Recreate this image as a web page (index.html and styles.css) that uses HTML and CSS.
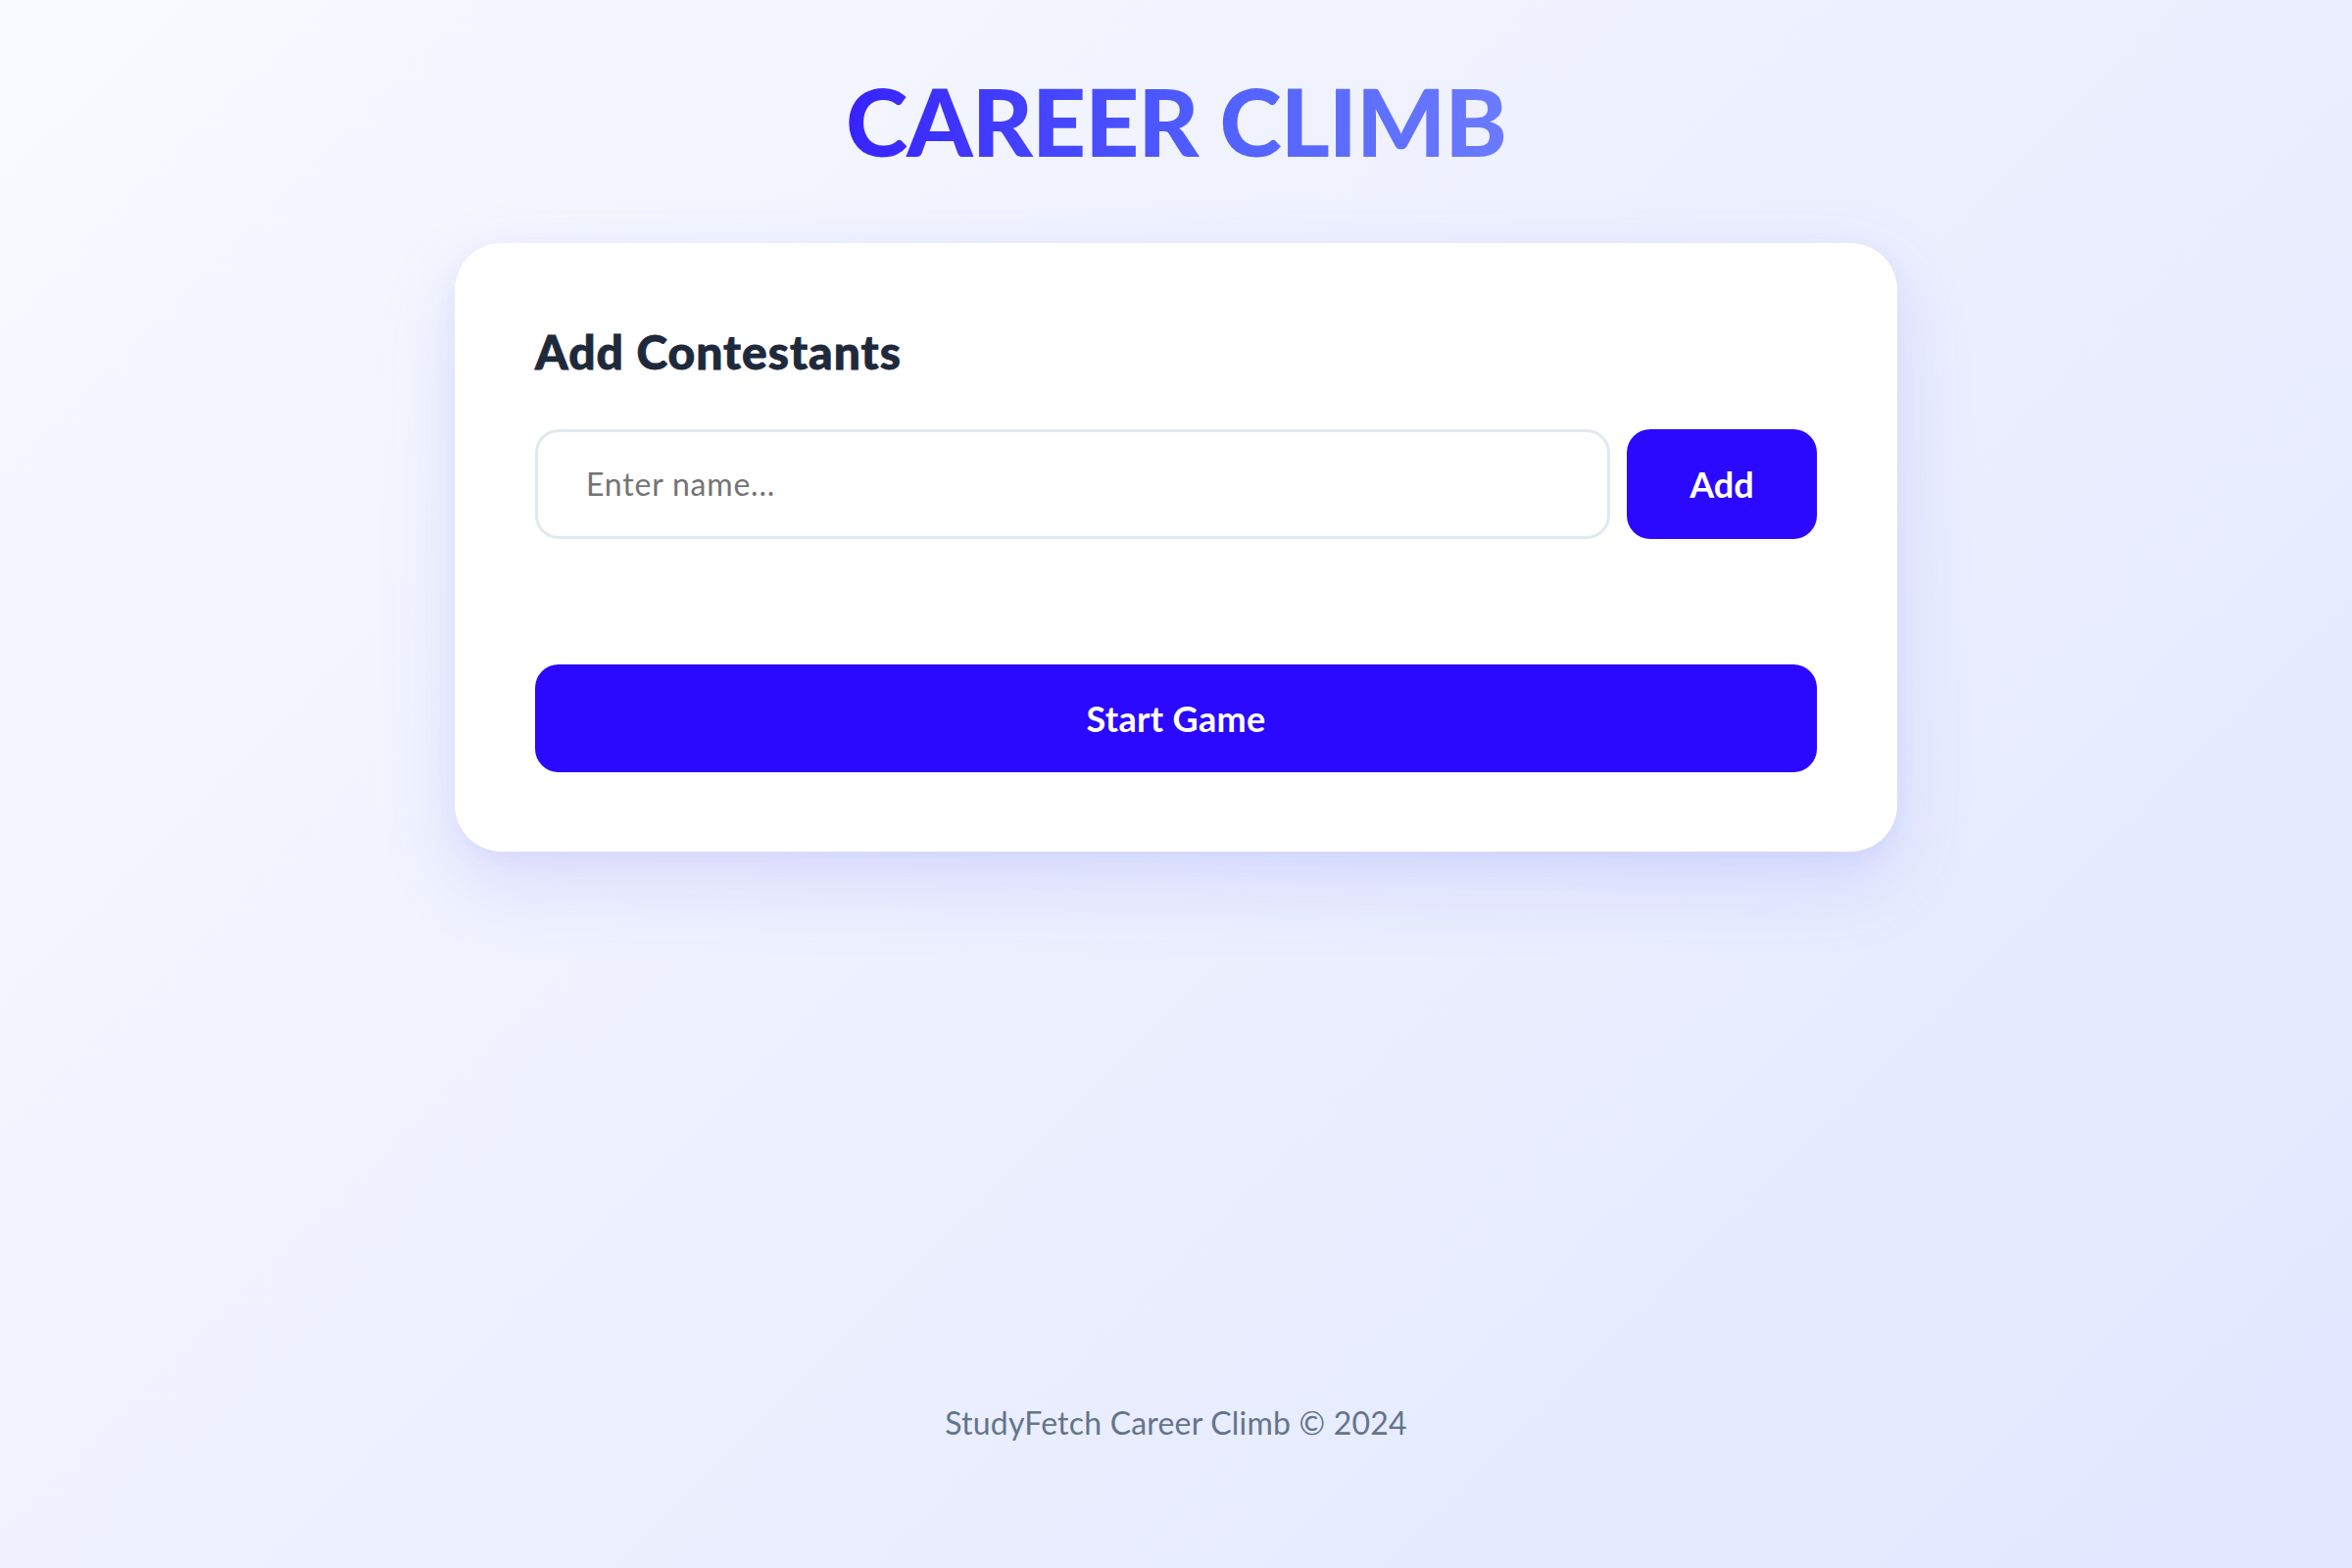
FILE: index.html
```html
<!DOCTYPE html>
<html lang="en">
<head>
<meta charset="utf-8">
<title>Career Climb</title>
<link rel="stylesheet" href="styles.css">
</head>
<body>
  <h1 class="title">CAREER CLIMB</h1>
  <main class="card">
    <h2 class="card-heading">Add Contestants</h2>
    <form class="add-row" onsubmit="return false">
      <input class="name-input" type="text" placeholder="Enter name...">
      <button class="btn btn-add" type="button">Add</button>
    </form>
    <button class="btn btn-start" type="button">Start Game</button>
  </main>
  <footer class="footer">StudyFetch Career Climb © 2024</footer>
</body>
</html>
```

FILE: styles.css
```css
* { box-sizing: border-box; }
html, body { margin: 0; padding: 0; }
body {
  min-height: 100vh;
  display: flex;
  flex-direction: column;
  align-items: center;
  font-family: Lato, "Open Sans", "Liberation Sans", sans-serif;
  background: linear-gradient(135deg, #f8faff 0%, #eef1fe 45%, #e0e7ff 100%);
}
.title {
  margin: 65px 0 0;
  font-size: 96px;
  line-height: 1.2;
  font-weight: 900;
  letter-spacing: -1px;
  background: linear-gradient(90deg, #3722ff 0%, #5060ff 55%, #6b7bff 100%);
  -webkit-background-clip: text;
  background-clip: text;
  color: transparent;
}
.card {
  margin-top: 68px;
  width: 1472px;
  padding: 82px 82px 81px;
  background: #ffffff;
  border-radius: 48px;
  box-shadow: 0 30px 80px rgba(99, 102, 241, 0.16), 0 8px 24px rgba(99, 102, 241, 0.06);
}
.card-heading {
  margin: 0 0 50px;
  font-size: 48px;
  line-height: 1.2;
  font-weight: 900;
  color: #1e293b;
  letter-spacing: 1px;
  -webkit-text-stroke: 0.8px #1e293b;
}
.add-row {
  display: flex;
  gap: 17px;
  margin: 0;
}
.name-input {
  flex: 1;
  height: 112px;
  border: 3px solid #e2e8f0;
  border-radius: 24px;
  padding: 0 49px;
  font-family: inherit;
  font-size: 32px;
  letter-spacing: 0.8px;
  color: #1e293b;
  background: #fff;
  outline: none;
}
.name-input::placeholder { color: #747474; }
.btn {
  border: none;
  background: #2b08ff;
  color: #ffffff;
  font-family: inherit;
  font-weight: 700;
  font-size: 36px;
  border-radius: 24px;
  cursor: pointer;
}
.btn-add {
  width: 194px;
  height: 112px;
}
.btn-start {
  display: block;
  width: 100%;
  height: 110px;
  margin-top: 128px;
  letter-spacing: 0.3px;
}
.footer {
  margin-top: auto;
  padding-bottom: 129px;
  font-size: 32px;
  line-height: 1.2;
  letter-spacing: 0.2px;
  color: #64748b;
}
```
